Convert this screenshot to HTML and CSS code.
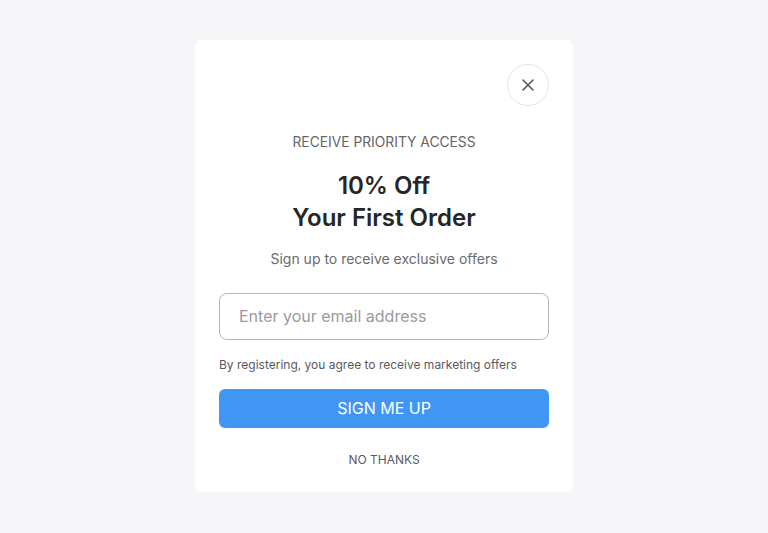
FILE: index.html
```html
<!DOCTYPE html>
<html lang="en">
<head>
<meta charset="utf-8">
<link rel="stylesheet" href="styles.css">
</head>
<body>
<div class="page">
  <div class="modal">
    <div class="top">
      <button class="close" aria-label="Close">
        <svg width="14" height="14" viewBox="0 0 14 14"><path d="M2 2L12 12M12 2L2 12" stroke="#555" stroke-width="1.6" stroke-linecap="round"/></svg>
      </button>
    </div>
    <p class="eyebrow">RECEIVE PRIORITY ACCESS</p>
    <h1 class="title">10% Off<br>Your First Order</h1>
    <p class="sub">Sign up to receive exclusive offers</p>
    <input class="email" type="text" placeholder="Enter your email address">
    <p class="legal">By registering, you agree to receive marketing offers</p>
    <button class="cta">SIGN ME UP</button>
    <button class="skip">NO THANKS</button>
  </div>
</div>
</body>
</html>
```
FILE: styles.css
```css
* { box-sizing: border-box; }
html, body { margin: 0; padding: 0; }
body {
  background: #f6f6f8;
  font-family: Inter, "Noto Sans", sans-serif;
  width: 768px;
  height: 533px;
}
.page {
  display: flex;
  justify-content: center;
  padding-top: 40px;
}
.modal {
  width: 378px;
  height: 452px;
  background: #fff;
  border-radius: 6px;
  padding: 24px 24px;
  display: flex;
  flex-direction: column;
  align-items: stretch;
  text-align: center;
}
.top {
  display: flex;
  justify-content: flex-end;
}
.close {
  width: 42px;
  height: 42px;
  border-radius: 50%;
  border: 1px solid #e6e6e8;
  background: #fff;
  display: flex;
  align-items: center;
  justify-content: center;
  padding: 0;
}
.eyebrow {
  margin: 28px 0 0;
  font-size: 13.8px;
  line-height: 16px;
  color: #666;
}
.title {
  margin: 20px 0 0;
  font-size: 24px;
  line-height: 32px;
  font-weight: 600;
  color: #262626;
}
.sub {
  margin: 16px 0 0;
  font-size: 14px;
  line-height: 18px;
  color: #6a6a6e;
}
.email {
  margin-top: 25px;
  height: 48px;
  border: 1px solid #b5b5b8;
  border-radius: 8px;
  padding: 0 19px;
  font-family: inherit;
  font-size: 16px;
  color: #333;
  outline: none;
}
.email::placeholder { color: #9a9a9e; }
.legal {
  margin: 17px 0 0;
  font-size: 12px;
  line-height: 16px;
  color: #5a5a5e;
  text-align: left;
}
.cta {
  margin-top: 16px;
  height: 40px;
  border: none;
  border-radius: 6px;
  background: #4196f5;
  color: #fff;
  font-family: inherit;
  font-size: 16px;
  padding: 0;
}
.skip {
  margin: 24px auto 0;
  border: none;
  background: none;
  font-family: inherit;
  font-size: 12px;
  line-height: 16px;
  color: #5a5a5e;
  padding: 0;
}
```
